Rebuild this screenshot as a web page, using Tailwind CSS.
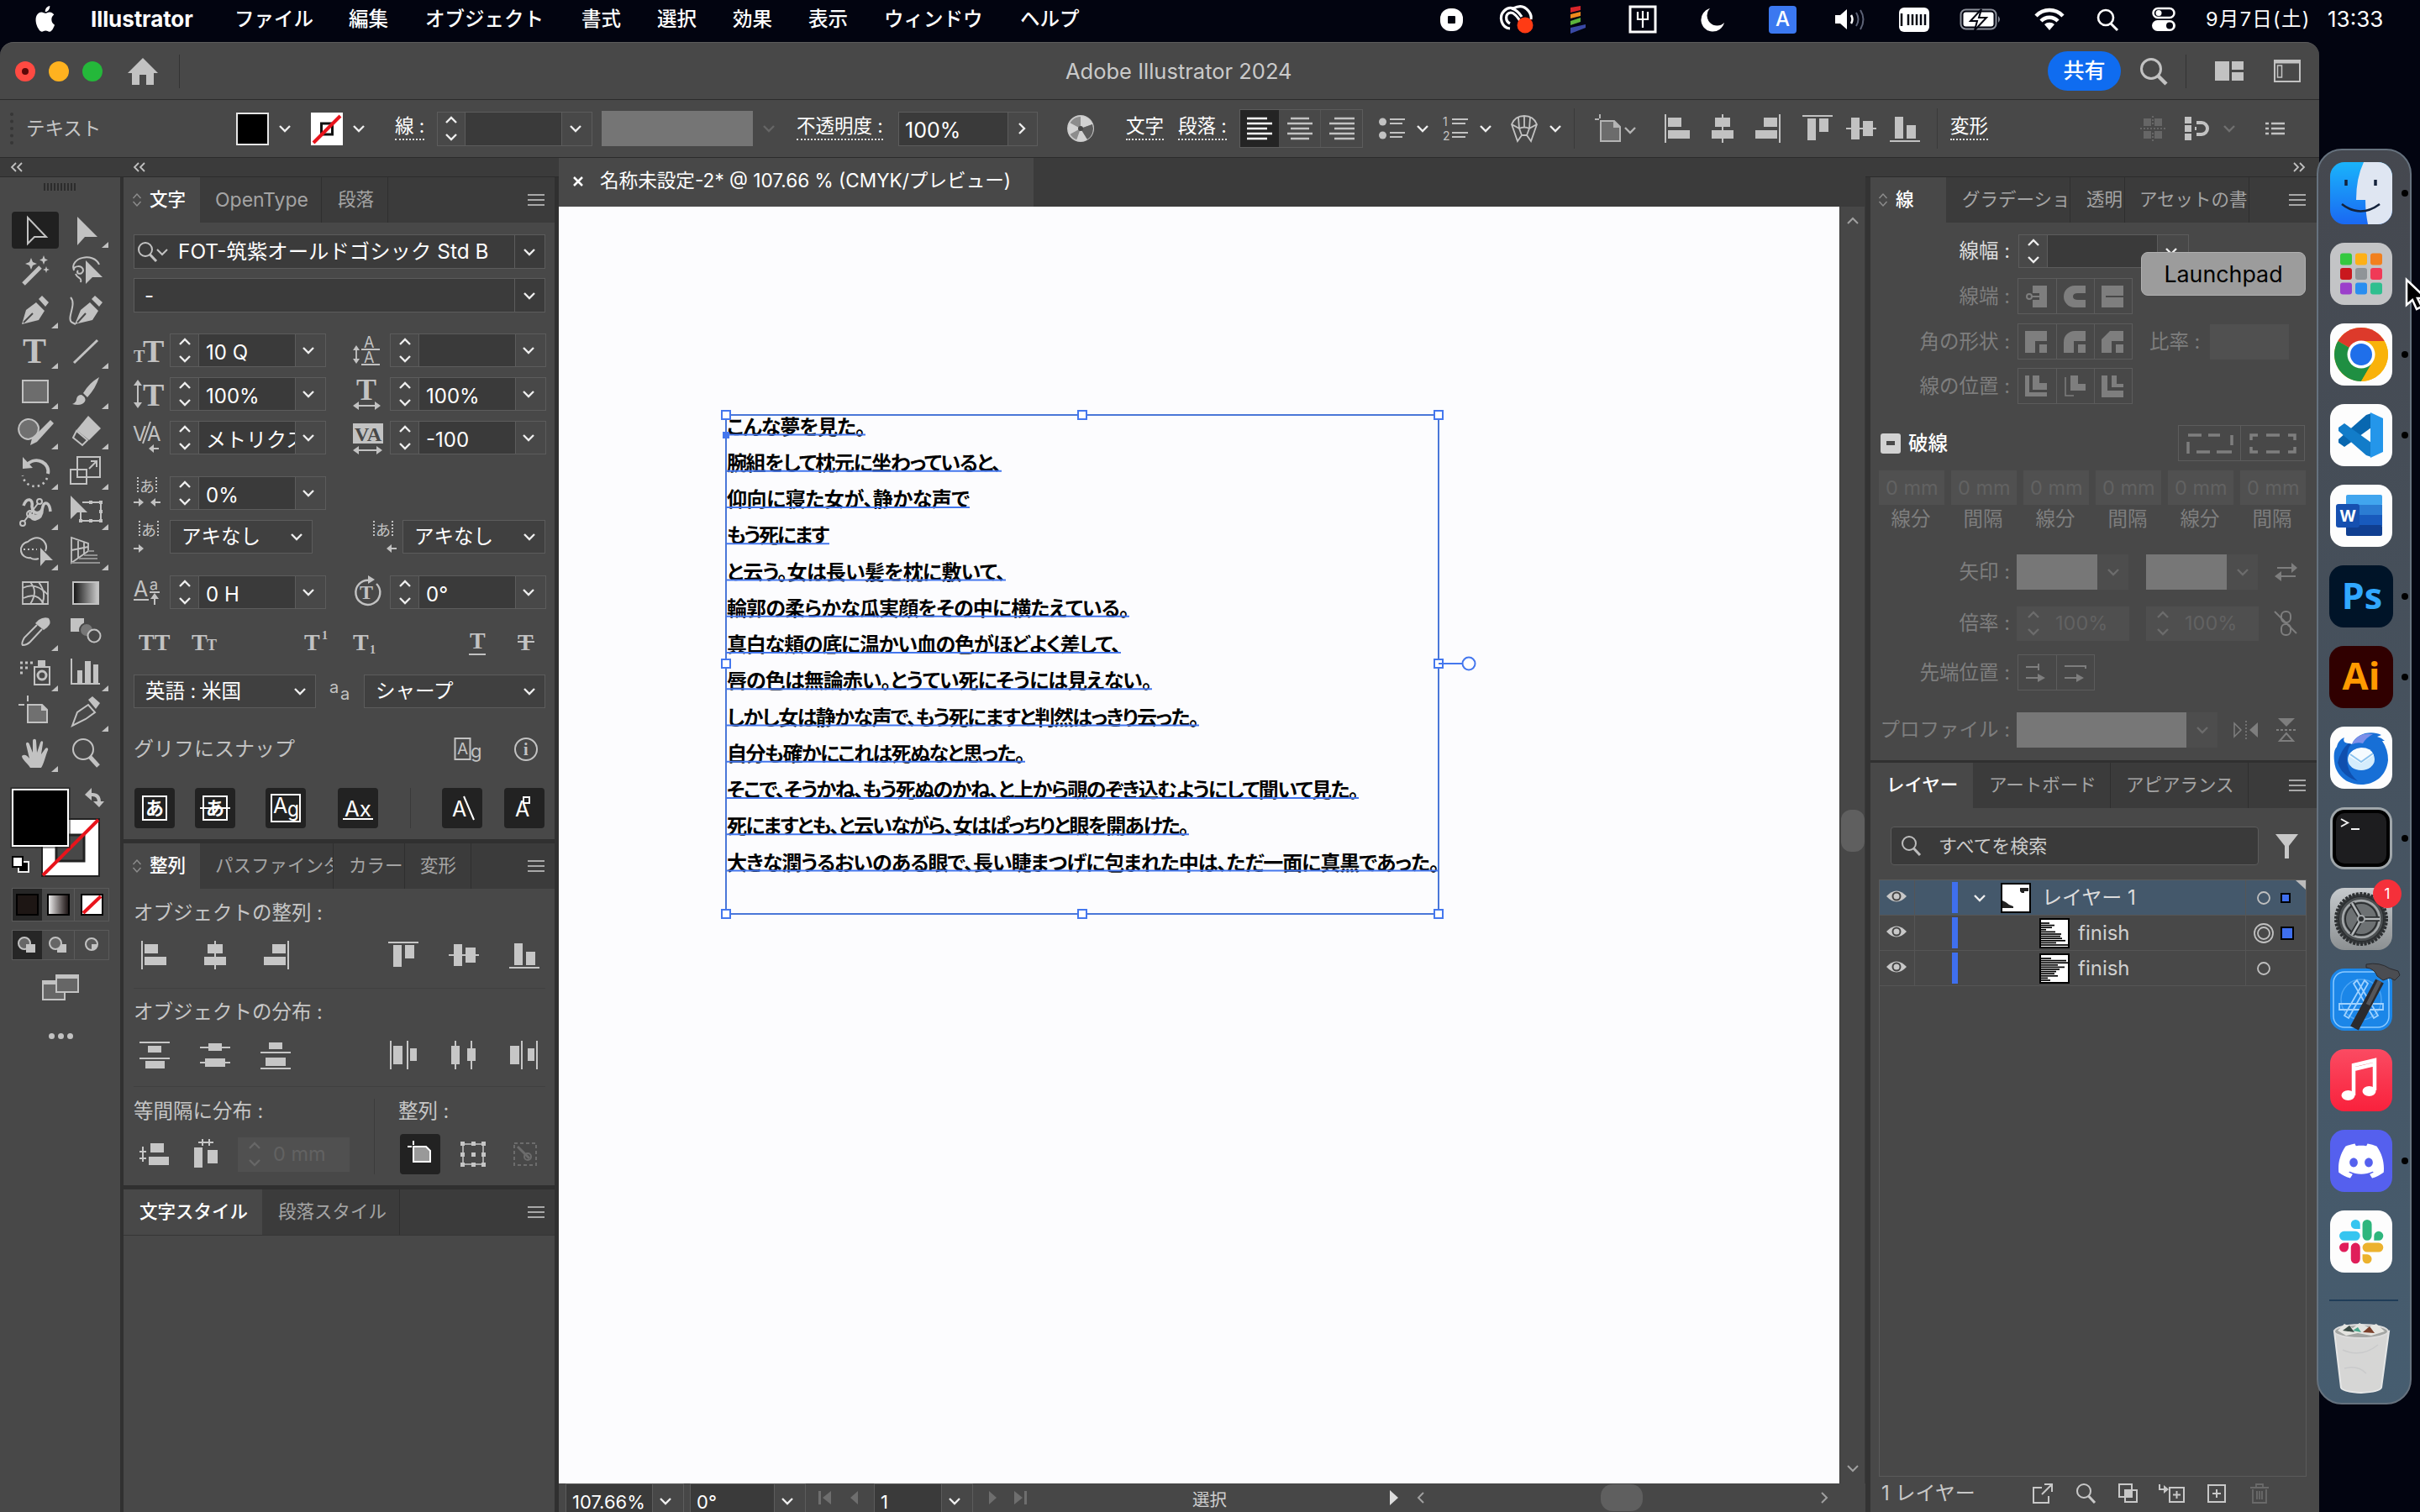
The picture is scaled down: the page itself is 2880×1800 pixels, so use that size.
<!DOCTYPE html>
<html lang="ja">
<head>
<meta charset="utf-8">
<title>Adobe Illustrator 2024</title>
<script src="https://cdn.jsdelivr.net/npm/@tailwindcss/browser@4"></script>
</head>
<body class="relative w-[2880px] h-[1800px] overflow-hidden bg-[#020410] font-['Inter','Noto_Sans_CJK_JP',sans-serif] text-[24px] leading-none text-[#d0d0d0] whitespace-nowrap">
<script>
const S = (w, h, b, c = '') => `<svg width="${w}" height="${h}" viewBox="0 0 ${w} ${h}" class="shrink-0 overflow-visible ${c}" fill="none" stroke="currentColor" stroke-width="2">${b}</svg>`;
const T = (x, y, s, t, extra = '') => `<text x="${x}" y="${y}" font-size="${s}" fill="currentColor" stroke="none" ${extra}>${t}</text>`;
const R = (x, y, w, h, extra = '') => `<rect x="${x}" y="${y}" width="${w}" height="${h}" fill="currentColor" stroke="none" ${extra}/>`;
const P = (d, extra = '') => `<path d="${d}" ${extra}/>`;
const F = (d) => `<path d="${d}" fill="currentColor" stroke="none"/>`;
const SERIF = 'font-family="Liberation Serif" font-weight="bold"';
const JP = 'font-family="Noto Sans CJK JP"';
const down = (c = 'text-[#eeeeee]') => S(16, 10, P('M2 2L8 8L14 2', 'stroke-width="2.4"'), c);
const menu = S(20, 16, P('M0 2H20M0 8H20M0 14H20'), 'text-[#a8a8a8]');
const spin = (c) => S(16, 32, P('M2 9L8 3L14 9M2 23L8 29L14 23', 'stroke-width="2.4"'), c);
const diamond = S(12, 18, P('M1.5 7L6 2L10.500 7M1.500 11L6 16L10.500 11', 'stroke-width="1.500"'), 'text-[#8c8c8c]');
const lens = (c) => S(24, 26, '<circle cx="10" cy="10" r="8"/>' + P('M15.500 16L23 24', 'stroke-width="3"'), c);

/* align icons, 36 x 36 */
const alignIcons = [
  P('M3 1V35') + R(6, 5, 16, 11) + R(6, 20, 26, 10),
  P('M18 1V35') + R(9, 5, 18, 11) + R(5, 20, 26, 10),
  P('M33 1V35') + R(14, 5, 16, 11) + R(4, 20, 26, 10),
  P('M0 3H36') + R(6, 6, 10, 26) + R(20, 6, 11, 16),
  P('M0 18H36') + R(6, 5, 10, 26) + R(20, 9, 12, 18),
  P('M0 33H36') + R(6, 4, 10, 26) + R(20, 14, 11, 16)
].map(b => S(36, 36, b));
const distIcons = [
  P('M0 3H36M0 22H36') + R(10, 7, 16, 8) + R(7, 25, 23, 9),
  P('M0 9H36M0 27H36') + R(10, 4, 16, 9) + R(6, 22, 24, 10),
  P('M0 15H36M0 34H36') + R(10, 3, 16, 8) + R(6, 21, 24, 10),
  P('M2 1V35M22 1V35') + R(5, 7, 11, 22) + R(25, 10, 8, 15),
  P('M8 1V35M27 1V35') + R(3, 7, 10, 22) + R(22, 10, 10, 15),
  P('M16 1V35M34 1V35') + R(2, 7, 11, 22) + R(23, 10, 8, 15)
].map(b => S(36, 36, b));

/* ---------- menu bar ---------- */
const mi = (w, t) => `<div class="${w} shrink-0">${t}</div>`;
const APPLE = '<path transform="translate(0 0) scale(1.15 1.28)" fill="currentColor" stroke="none" d="M12.152 6.896c-.948 0-2.415-1.078-3.96-1.04-2.04.027-3.91 1.183-4.961 3.014-2.117 3.675-.546 9.103 1.519 12.09 1.013 1.454 2.208 3.09 3.792 3.039 1.52-.065 2.09-.987 3.935-.987 1.831 0 2.35.987 3.96.948 1.637-.026 2.676-1.48 3.676-2.948 1.156-1.688 1.636-3.325 1.662-3.415-.039-.013-3.182-1.221-3.22-4.857-.026-3.04 2.48-4.494 2.597-4.559-1.429-2.09-3.623-2.324-4.39-2.376-2-.156-3.675 1.09-4.61 1.09zM15.53 3.83c.843-1.012 1.4-2.427 1.245-3.83-1.207.052-2.662.805-3.532 1.818-.78.896-1.454 2.338-1.273 3.714 1.338.104 2.715-.688 3.559-1.701"/>';
const menubar = `<header class="h-[50px] pb-[4px] pl-[40px] flex items-center text-white text-[23.5px] font-medium shrink-0">
${mi('w-[68px]', S(28, 32, APPLE))}
${mi('w-[171px] font-bold text-[26px] tracking-[-0.1px]', 'Illustrator')}${mi('w-[136px]', 'ファイル')}${mi('w-[91px]', '編集')}${mi('w-[186px]', 'オブジェクト')}${mi('w-[90px]', '書式')}${mi('w-[90px]', '選択')}${mi('w-[90px]', '効果')}${mi('w-[90px]', '表示')}${mi('w-[162px]', 'ウィンドウ')}${mi('w-[500px]', 'ヘルプ')}
${mi('w-[70px]', S(27, 27, '<rect width="27" height="27" rx="12" fill="currentColor" stroke="none"/><rect x="9" y="9" width="9" height="9" rx="1" fill="#020410" stroke="none"/>'))}
${mi('w-[84px]', S(42, 34, '<g stroke-width="3.200"><path d="M13 28C3 27 -1 14 6 7Q11 2 17 4Q28 -2 35 7Q39 12 38 17"/><path d="M13 22C7 19 7 10 14 9Q19 9 27 22M15 4Q22 6 27 14"/></g><circle cx="31" cy="24" r="9.500" fill="#ff3b14" stroke="none"/>'))}
${mi('w-[70px]', S(22, 34, '<g stroke="none"><path fill="#d9252a" d="M1 3L13 1V6L1 9Z"/><path fill="#ef8a1d" d="M1 11L13 8V13L1 16Z"/><path fill="#5cb33c" d="M1 19L13 15V20L1 24Z"/><path fill="#3a49a5" d="M1 27L19 23V27L1 34Z"/></g>'))}
${mi('w-[87px]', S(34, 34, '<rect x="2" y="2" width="30" height="30" stroke-width="3"/>' + P('M11 8V17H23V8M17 7V27', 'stroke-width="2.200"')))}
${mi('w-[80px]', S(28, 28, F('M10 1A14 14 0 1 0 27 18A12 12 0 0 1 10 1Z')))}
${mi('w-[78px]', '<div class="w-[33px] h-[33px] rounded-[4px] bg-[#3b78f0] flex items-center justify-center text-[24px]">A</div>')}
${mi('w-[77px]', S(42, 30, F('M1 10H7L15 3V27L7 20H1Z') + P('M20 10Q23 15 20 20', 'stroke-width="2.500"') + P('M26 7Q31 15 26 23M31 4Q38 15 31 27', 'stroke="#5d6377"')))}
${mi('w-[72px]', S(36, 29, '<rect x="0" y="0" width="36" height="29" rx="6" fill="currentColor" stroke="none"/><path stroke="#020410" d="M3 7V22M11 8V21M16 8V21M21 8V21M26 8V21M31 8V21" stroke-width="2.500"/>'))}
${mi('w-[89px]', S(50, 26, '<rect x="1.500" y="1.500" width="42" height="23" rx="6" stroke="#8b8f99"/><rect x="4.500" y="4.500" width="36" height="17" rx="3" fill="currentColor" stroke="none"/><path d="M46 9Q50 13 46 17" fill="#8b8f99" stroke="none"/><path fill="currentColor" stroke="#020410" d="M26 1L13 15H21L18 26L32 11H23Z"/>'))}
${mi('w-[74px]', S(36, 28, F('M18 27L12 20A9 9 0 0 1 24 20Z') + P('M8 16A14 14 0 0 1 28 16M2 10A22 22 0 0 1 34 10', 'stroke-width="4.500"')))}
${mi('w-[66px]', S(26, 27, '<circle cx="11" cy="11" r="9" stroke-width="2.600"/>' + P('M17 18L25 26', 'stroke-width="3"')))}
${mi('w-[64px]', S(28, 30, '<rect x="1.500" y="2" width="25" height="11" rx="5.500" stroke-width="2.500"/><circle cx="8" cy="7.500" r="3.500" fill="currentColor" stroke="none"/><rect x="0" y="16" width="28" height="13" rx="6.500" fill="currentColor" stroke="none"/><circle cx="21" cy="22.500" r="4" fill="#020410" stroke="none"/>'))}
${mi('w-[145px] text-[23.500px] font-normal tracking-[1.300px]', '9月7日(土)')}${mi('w-[80px] text-[26px] font-normal', '13:33')}
</header>`;

/* ---------- title bar ---------- */
const titlebar = `<div class="relative h-[68px] flex items-center border-b border-[#2c2c2c] shrink-0">
<div class="flex gap-[16px] pl-[18px]"><div class="w-6 h-6 rounded-full bg-[#ff4a42] flex items-center justify-center"><div class="w-2 h-2 rounded-full bg-[#5c0808]"></div></div><div class="w-6 h-6 rounded-full bg-[#ffb21f]"></div><div class="w-6 h-6 rounded-full bg-[#24b83a]"></div></div>
<div class="ml-[30px] w-[61px]">${S(36, 32, F('M18 0L36 18H31V32H22V20H14V32H5V18H0Z'), 'text-[#c2c2c2]')}</div>
<div class="w-px h-[40px] bg-[#333]"></div>
<div class="ml-[1054px] w-[1169px] text-[25.500px] text-[#cacaca]">Adobe Illustrator 2024</div>
<div class="w-[87px] h-[47px] rounded-full bg-[#0f6cf0] text-white text-[25px] font-medium flex items-center justify-center">共有</div>
<div class="ml-[22px] w-[55px]">${S(34, 34, '<circle cx="14" cy="14" r="11.500" stroke-width="3"/>' + P('M22 22L32 32', 'stroke-width="4.500"'), 'text-[#c2c2c2]')}</div>
<div class="w-px h-[40px] bg-[#333]"></div>
<div class="ml-[34px] w-[70px]">${S(35, 24, R(0, 0, 17, 23) + R(20, 0, 14, 10) + R(20, 13, 14, 10), 'text-[#c2c2c2]')}</div>
${S(32, 27, '<rect x="1" y="1" width="30" height="25"/>' + P('M1 3H31', 'stroke-width="3"') + '<rect x="4.500" y="7" width="5" height="14" stroke-width="1.500"/>', 'text-[#c2c2c2]')}
</div>`;

/* ---------- control bar ---------- */
const u = 'border-b-2 border-dotted border-[#dddddd] pb-[3px] inline-block text-white';
const vline = '<div class="w-px h-[48px] bg-[#3a3a3a]"></div>';
const para = (a) => S(30, 28, P(a, 'stroke-width="2.400"'));
const controlbar = `<div class="h-[69px] flex items-center border-b border-[#2c2c2c] shrink-0 text-[22.500px]">
<div class="w-[31px] h-[38px] pl-[12px]"><div class="w-[4px] h-full border-l-4 border-dotted border-[#363636]"></div></div>
<div class="w-[250px] text-[#c6c6c6]">テキスト</div>
<div class="w-[39px] h-[39px] bg-black border-2 border-[#e6e6e6]"></div><div class="w-[50px] pl-[11px]">${down()}</div>
${S(38, 39, '<rect width="38" height="39" fill="#fff" stroke="none"/><rect x="12.500" y="13" width="13" height="13" fill="#fff" stroke="#111" stroke-width="3"/><path d="M3 36L35 4" stroke="#e8141c" stroke-width="4"/>')}
<div class="w-[62px] pl-[11px]">${down()}</div>
<div class="w-[50px]"><span class="${u}">線 :</span></div>
<div class="w-[34px] h-[41px] border border-[#5c5c5c] flex items-center justify-center">${spin('text-[#eeeeee]')}</div><div class="w-[114px] h-[41px] border-y border-[#5c5c5c] bg-[#3a3a3a]"></div><div class="w-[37px] h-[41px] border border-[#5c5c5c] flex items-center justify-center pr-[4px]">${down()}</div>
<div class="ml-[11px] w-[180px] h-[42px] bg-[#757575]"></div><div class="w-[52px] pl-[11px]">${down('text-[#666666]')}</div>
<div class="w-[121px]"><span class="${u}">不透明度 :</span></div>
<div class="w-[131px] h-[41px] border border-[#5c5c5c] bg-[#3a3a3a] flex items-center pl-[7px] pt-[5px] text-white text-[25px]">100%</div><div class="w-[35px] h-[41px] border border-l-0 border-[#5c5c5c] flex items-center justify-center pr-[3px]">${S(10, 16, P('M2 2L8 8L2 14', 'stroke-width="2.400"'), 'text-[#eeeeee]')}</div>
<div class="ml-[34px] w-[71px]">${S(34, 34, '<circle cx="17" cy="17" r="15" fill="#8c8c8c" stroke="#c8c8c8"/><path d="M17 17L17 2A15 15 0 0 1 31 12ZM17 17L4 10A15 15 0 0 0 4 24ZM17 17L12 31A15 15 0 0 0 25 30Z" fill="#d2d2d2" stroke="none"/><path d="M17 17L31 12A15 15 0 0 1 25 30Z" fill="#5c5c5c" stroke="none"/><circle cx="17" cy="17" r="3" fill="#484848" stroke="none"/>')}</div>
<div class="w-[62px]"><span class="${u}">文字</span></div><div class="w-[73px]"><span class="${u}">段落 :</span></div>
<div class="flex border border-[#5c5c5c] h-[46px] text-[#c2c2c2]"><div class="w-[46px] bg-[#242424] text-white flex items-center justify-center">${para('M0 2H24M0 8H30M0 14H24M0 20H30M0 26H24')}</div><div class="w-[50px] border-r border-[#555] flex items-center justify-center">${para('M4 2H26M0 8H30M4 14H26M0 20H30M4 26H26')}</div><div class="w-[49px] flex items-center justify-center">${para('M6 2H30M0 8H30M6 14H30M0 20H30M6 26H30')}</div></div>
<div class="ml-[19px] w-[44px] text-[#c2c2c2]">${S(31, 26, '<circle cx="4.500" cy="5" r="4.500" fill="currentColor" stroke="none"/><circle cx="4.500" cy="21" r="4.500" fill="currentColor" stroke="none"/>' + P('M13 2H31M13 7H28M13 18H31M13 23H28'))}</div><div class="w-[32px]">${down()}</div>
<div class="w-[43px] text-[#c2c2c2]">${S(30, 30, T(0, 12, 14, '1') + T(0, 29, 14, '2') + P('M11 4H30M11 9H27M11 20H30M11 25H27'))}</div><div class="w-[37px]">${down()}</div>
<div class="w-[46px] text-[#c2c2c2]">${S(34, 32, P('M2 11Q6 1 17 1Q28 1 32 11L25 31L20 24H14L9 31ZM2 11L11 16L14 24M32 11L23 16L20 24M11 16Q17 13 23 16M17 1V14M10 3L11 16M24 3L23 16', 'stroke-width="1.800"'))}</div><div class="w-[30px]">${down()}</div>
${vline}
<div class="ml-[24px] w-[34px] text-[#b4b4b4]">${S(32, 34, P('M6 0V5M0 6H5', 'stroke-width="2"') + '<path d="M7 8H23L30 15V32H7Z" fill="#6c6c6c"/>' + F('M22 7L31 16H22Z'))}</div><div class="w-[47px] pt-[4px]">${down('text-[#b4b4b4]')}</div>
<div class="flex gap-[17px] text-[#c2c2c2]">${alignIcons.slice(0, 3).join('')}</div><div class="flex gap-[16px] ml-[24px] text-[#c2c2c2]">${alignIcons.slice(3).join('')}</div>
<div class="ml-[20px] w-[16px]">${vline}</div><div class="w-[226px]"><span class="${u}">変形</span></div>
<div class="w-[53px] text-[#666]">${S(30, 30, P('M15 0V10M0 15H30M15 20V30', 'stroke-dasharray="2 2"') + R(4, 3, 9, 9) + R(17, 3, 9, 9) + R(4, 18, 9, 9) + R(17, 18, 9, 9))}</div>
<div class="w-[45px] text-[#c2c2c2]">${S(32, 32, R(0, 2, 8, 8) + R(0, 12, 8, 8) + R(0, 22, 8, 8) + P('M12 16H14M14 9H20A7 7 0 0 1 20 23H14', 'stroke-width="4"'))}</div>
<div class="w-[51px]">${down('text-[#707070]')}</div>
<div class="text-[#c2c2c2]">${S(24, 18, P('M7 3H23M7 9H23M7 15H23M0 3H4M0 9H4M0 15H4', 'stroke-width="2.400"'))}</div>
</div>`;

/* ---------- toolbar ---------- */
const tri = F('M57 38V45H49Z');
const tools = [
 ['<rect x="2" y="2" width="56" height="44" rx="4" fill="#202020" stroke="none"/>' + P('M21 9V40L29 32H43Z'), 0],
 [F('M20 8V42L29 32H44Z'), 1],
 [P('M16 40L36 20', 'stroke-width="5"') + F('M25 9L27 14L32 16L27 18L25 23L23 18L18 16L23 14ZM40 6L41.500 10L45 11.500L41.500 13L40 17L38.500 13L35 11.500L38.500 10ZM43 19L44 22L47 23L44 24L43 27L42 24L39 23L42 22Z'), 0],
 [P('M16 24C10 8 40 2 46 17M16 24C14 18 27 17 27 24C26 30 17 28 21 24M18 28C20 34 26 32 24 38') + F('M30 12V40L38 32H50Z'), 0],
 [F('M14 40L19 23L31 14L41 24L34 35ZM34 10L38 6L46 14L42 19Z') + P('M16 38L27 27', 'stroke="#484848"'), 1],
 [P('M12 8C20 16 6 34 14 38L18 40') + F('M17 40L24 23L35 14L45 24L38 35ZM37 10L41 6L50 14L46 19Z') + P('M20 38L30 27', 'stroke="#484848"'), 0],
 [T(15, 38, 42, 'T', SERIF), 1],
 [P('M16 38L44 11', 'stroke-width="3"'), 1],
 [R(14, 10, 32, 28, 'opacity=".3"') + P('M15 11H45V37H15Z'), 1],
 [F('M46 7Q42 20 32 31L27 26Q34 14 46 7ZM25 28Q31 31 29 36Q25 42 14 39Q19 37 19 33Q20 28 25 28Z'), 1],
 ['<path d="M22 33A12 12 0 1 1 34 19Q34 30 22 33" fill="#707070"/>' + F('M48 10L52 14L32 36L24 40L26 32Z'), 1],
 [F('M33 5L48 20L34 34L19 22Z') + P('M19 23L32 34L26 40L15 31Z'), 1],
 [P('M20 15C32 4 48 14 45 26', 'stroke-width="4"') + F('M15 6V20L27 19Z') + P('M44 31A15 15 0 0 1 15 28', 'stroke-dasharray="2.500 4" stroke-width="2.600"'), 1],
 [P('M20 6H47V30H20ZM12 21H31V38H12ZM34 20L42 12M36 11H43V18'), 1],
 [P('M16 16C20 5 28 8 26 17C27 28 38 26 39 17C41 10 47 12 48 23', 'stroke-width="3.500"') + F('M22 22Q30 32 40 20Q40 32 30 34Q22 34 22 22Z') + P('M15 37L35 11') + '<circle cx="15" cy="37" r="3" fill="#484848"/><circle cx="24" cy="26" r="4"/><circle cx="35" cy="11" r="3" fill="#484848"/>', 1],
 [F('M12 4V32L20 24H32Z') + P('M26 12H48V34H24V24') + R(34, 10, 4, 4) + R(46, 10, 4, 4) + R(46, 21, 4, 4) + R(46, 32, 4, 4) + R(34, 32, 4, 4) + R(22, 32, 4, 4), 1],
 [P('M34 31Q28 33 24 30A9.500 9.500 0 1 1 21 11Q32 2 40 10Q45 16 42 22') + P('M16 20H32', 'stroke-dasharray="2 3"') + F('M36 18V40L42 33H51Z'), 1],
 [P('M13 6V36L33 22V13ZM13 21L33 17M21 10V30M28 12V26', 'stroke-width="1.800"') + P('M33 22H40M28 27H44M22 31H44M13 36H47', 'stroke-width="1.800" stroke="#909090"'), 1],
 [P('M15 11H45V37H15ZM15 18Q30 10 45 26M16 30Q32 22 40 37M24 11Q34 22 24 37M34 11Q44 24 38 37', 'stroke-width="1.800"'), 0],
 ['<rect x="15" y="11" width="30" height="26" fill="url(#gr)"/>', 0],
 [F('M46 6Q50 12 44 17L40 20L30 12L34 8Q40 4 46 6Z') + P('M32 14L17 29Q13 36 15 38Q20 38 24 34L38 19'), 1],
 [R(12, 6, 16, 16) + '<circle cx="31" cy="20" r="8" fill="#777" stroke="#484848"/><circle cx="40" cy="27" r="7.500" fill="#484848"/>', 0],
 [P('M29 16H47V37H29Z') + R(33, 8, 9, 7) + '<circle cx="38" cy="26" r="5" stroke-width="3"/>' + P('M12 11H30M12 17H22M12 23H16', 'stroke-dasharray="3 3" stroke-width="3"'), 1],
 [P('M13 6V36H47') + R(20, 20, 6, 16) + R(29, 9, 7, 27) + R(39, 13, 6, 23), 1],
 [P('M21 2V9M10 13H17') + '<path d="M21 13H38L44 19V34H21Z" fill="#707070"/>' + F('M37 12L45 20H37Z'), 0],
 [P('M14 38L20 22L33 13L41 22L30 30Z') + F('M33 7L38 3L47 11L42 18Z'), 1],
 [F('M24 40C20 34 14 30 14 26C17 23 21 26 23 29L19 12C19 9 22 9 23 12L27 22L27 8C27 5 31 5 31 8L32 22L36 10C37 7 40 8 39 11L37 24L42 17C44 15 46 17 45 19C42 26 40 36 37 40Z'), 1],
 ['<circle cx="27" cy="18" r="12"/>' + P('M35 27L45 38', 'stroke-width="5"'), 0]
];
const dots = Array(10).fill('<div class="w-[2px] h-[9px] bg-[#2c2c2c]"></div>').join('');
const toolbar = `<aside class="w-[143px] shrink-0 bg-[#484848] flex flex-col text-[#c2c2c2]">
<div class="h-[39px] pt-[7px] pl-[52px] flex gap-[2px] items-start">${dots}</div>
<div class="grid grid-cols-2 w-[120px] ml-[12px]">${tools.map(t => S(60, 48, t[0] + (t[1] ? tri : ''))).join('')}</div>
<div class="h-[135px] pt-[16px]">${S(140, 110, '<g stroke="none"><rect x="50" y="37" width="68" height="68" fill="#fff" stroke="#222"/><rect x="67" y="56" width="33" height="31" fill="#484848" stroke="#222" stroke-width="3"/></g><path d="M51 104L117 38" stroke="#e8141c" stroke-width="4"/><rect x="15" y="2" width="66" height="67" fill="#000" stroke="#fff"/><rect x="13" y="0" width="70" height="71" stroke="#222" stroke-width="1"/><path d="M106 8H110Q118 8 118 17" stroke-width="4"/>' + F('M101 8L109 0V15ZM111 16H124L118 23Z') + '<rect x="22" y="88" width="12" height="12" fill="#000" stroke="#eee"/><rect x="15" y="82" width="12" height="12" fill="#fff" stroke="#000"/>')}</div>
<div class="ml-[14px] flex w-[116px] h-[40px] border border-[#5a5a5a]"><div class="w-[35px] bg-[#262626] flex items-center justify-center"><div class="w-[27px] h-[26px] border-2 border-black bg-[#1d1614]"></div></div><div class="w-[40px] border-r border-[#5a5a5a] flex items-center justify-center"><div class="w-[27px] h-[26px] border-2 border-black bg-linear-to-r from-[#eeeeee] to-[#221a1a]"></div></div><div class="w-[40px] flex items-center justify-center">${S(27, 26, '<rect x="1" y="1" width="25" height="24" fill="#fff" stroke="#000"/><path d="M3 23L24 3" stroke="#e8141c" stroke-width="4"/>')}</div></div>
<div class="mt-[10px] ml-[14px] flex w-[116px] h-[36px] border border-[#5a5a5a]"><div class="w-[35px] bg-[#262626] flex items-center justify-center">${S(24, 22, '<circle cx="9" cy="9" r="7" fill="#666"/>' + R(11, 10, 11, 10))}</div><div class="w-[40px] border-r border-[#5a5a5a] flex items-center justify-center">${S(24, 22, R(11, 10, 11, 10) + '<circle cx="9" cy="9" r="7" fill="#666"/>')}</div><div class="w-[40px] flex items-center justify-center">${S(20, 20, '<circle cx="10" cy="9" r="7" fill="#5a5a5a"/>' + F('M10 9H17Q17 16 10 16Z'))}</div></div>
<div class="mt-[16px] ml-[50px]">${S(46, 34, '<rect x="1" y="9" width="26" height="22" fill="#666"/><rect x="17" y="2" width="26" height="20" fill="#666"/>' + R(0, 8, 17, 5) + R(16, 1, 28, 5))}</div>
<div class="mt-[37px] ml-[58px] flex gap-[4px]"><div class="w-[7px] h-[7px] rounded-full bg-[#c2c2c2]"></div><div class="w-[7px] h-[7px] rounded-full bg-[#c2c2c2]"></div><div class="w-[7px] h-[7px] rounded-full bg-[#c2c2c2]"></div></div>
</aside>`;

/* ---------- left panels ---------- */
const tabOn = (w, t, d = '') => `<div class="${w} h-full bg-[#484848] text-white font-medium flex items-center shrink-0 gap-[9px]">${d}<span>${t}</span></div>`;
const tab = (w, t) => `<div class="${w} h-full border-r border-[#2f2f2f] text-[#a4a4a4] flex items-center shrink-0 overflow-hidden">${t}</div>`;
const tabs = (items, pr = 'pr-[12px]') => `<div class="h-[54px] shrink-0 bg-[#3b3b3b] flex items-center text-[21.500px]">${items}<div class="ml-auto ${pr}">${menu}</div></div>`;
const num = (v, w = 'w-[114px]') => `<div class="flex h-[40px] border border-[#5c5c5c] shrink-0"><div class="w-[34px] border-r border-[#5c5c5c] flex items-center justify-center">${spin('text-[#eeeeee]')}</div><div class="${w} bg-[#3a3a3a] pl-[8px] pt-[5px] flex items-center overflow-hidden text-white text-[24px]">${v}</div><div class="w-[36px] border-l border-[#5c5c5c] flex items-center justify-center pr-[5px]">${down()}</div></div>`;
const row = (mt, i1, v1, i2, v2) => `<div class="${mt} flex items-center h-[40px]"><div class="w-[43px]">${i1}</div>${num(v1)}${i2 ? `<div class="w-[76px] pl-[32px]">${i2}</div>${num(v2)}` : ''}</div>`;
const sel = (w, t) => `<div class="${w} h-[40px] shrink-0 bg-[#404040] border border-[#5c5c5c] text-white flex items-center justify-between pl-[13px] pr-[10px] text-[23.500px]"><span>${t}</span>${down()}</div>`;
const gbtn = (b) => `<div class="w-[48px] h-[48px] rounded-[4px] bg-[#222222] text-white flex items-center justify-center">${S(40, 36, b)}</div>`;
const arrows = (x1, x2, y) => P(`M${x1 + 3} ${y}H${x2 - 3}`) + F(`M${x1} ${y}L${x1 + 7} ${y - 5}V${y + 5}ZM${x2} ${y}L${x2 - 7} ${y - 5}V${y + 5}Z`);
const larr = (x, y) => P(`M${x + 3} ${y}H${x + 12}`) + F(`M${x} ${y}L${x + 6} ${y - 5}V${y + 5}Z`);
const rarr = (x, y) => P(`M${x} ${y}H${x + 8}`) + F(`M${x + 12} ${y}L${x + 6} ${y - 5}V${y + 5}Z`);
const aki = (x) => T(x + 3, 18, 18, 'あ', JP) + P(`M${x + 1} 0V20M${x + 23} 0V20`, 'stroke-dasharray="2 2"');
const leftPanels = `<section class="w-[513px] shrink-0 bg-[#484848] flex flex-col">
${tabs(tabOn('w-[91px] pl-[10px]', '文字', diamond) + tab('w-[145px] pl-[18px] text-[23px]', 'OpenType') + tab('w-[79px] pl-[19px]', '段落'))}
<div class="pl-[12px] text-[#c2c2c2] h-[734px] shrink-0">
<div class="mt-[14px] w-[490px] h-[41px] border border-[#5c5c5c] bg-[#3b3b3b] flex items-center text-white text-[24.400px]"><div class="w-[26px] pl-[3px]">${lens('text-[#c2c2c2]')}</div><div class="w-[26px]">${S(14, 10, P('M1 2L7 8L13 2'), 'text-[#c2c2c2]')}</div><div class="w-[400px]">FOT-筑紫オールドゴシック Std B</div><div class="w-[36px] h-full border-l border-[#5c5c5c] flex items-center justify-center pr-[2px]">${down()}</div></div>
<div class="mt-[11px] w-[490px] h-[41px] border border-[#5c5c5c] bg-[#3b3b3b] flex items-center text-white"><div class="w-[452px] pl-[12px]">-</div><div class="w-[36px] h-full border-l border-[#5c5c5c] flex items-center justify-center pr-[2px]">${down()}</div></div>
${row('mt-[25px]', S(40, 36, T(11, 32, 38, 'T', SERIF) + T(0, 32, 20, 'T', SERIF)), '10 Q', S(36, 38, T(13, 16, 18, 'A') + T(13, 34, 18, 'A') + P('M10 18H32M10 36H32M4 17V31', 'stroke-width="1.800"') + F('M4 13L0 19H8ZM4 35L0 29H8Z')), '')}
${row('mt-[12px]', S(40, 36, T(11, 32, 38, 'T', SERIF) + P('M5 5V31') + F('M5 1L0 8H10ZM5 35L0 28H10Z')), '100%', S(36, 38, T(4, 26, 36, 'T', SERIF) + arrows(0, 33, 33)), '100%')}
${row('mt-[12px]', S(40, 40, T(-1, 24, 24, 'V') + T(16, 24, 24, 'A') + P('M11 27L20 1') + larr(18, 33)), 'メトリクス', S(38, 40, R(0, 3, 36, 24) + '<text x="2" y="24" font-size="24" font-family="Liberation Serif" font-weight="bold" fill="#484848" stroke="none" textLength="32">VA</text>' + arrows(0, 35, 35)), '-100')}
${row('mt-[26px]', S(40, 38, aki(4) + rarr(0, 30) + larr(20, 30)), '0%')}
<div class="mt-[12px] flex h-[40px] items-center"><div class="w-[43px]">${S(40, 38, aki(6) + rarr(0, 33))}</div>${sel('w-[170px]', 'アキなし')}<div class="w-[107px] pl-[72px]">${S(34, 38, aki(0) + larr(16, 33))}</div>${sel('w-[170px]', 'アキなし')}</div>
${row('mt-[26px]', S(40, 38, T(0, 24, 25, 'A') + T(19, 16, 18, 'a') + P('M0 28H18M19 19H31M25 23V34') + F('M25 20L20 27H30Z')), '0 H', S(36, 38, P('M20 5A14.500 14.500 0 1 0 28 9', 'stroke-width="2.400"') + F('M18 -1L26 4L18 9Z') + T(8, 27, 24, 'T', SERIF)), '0°')}
<div class="mt-[22px] h-[34px] flex items-center">${S(490, 34, T(6, 27, 28, 'TT', SERIF) + T(69, 27, 28, 'T', SERIF) + T(87, 27, 18, 'T', SERIF) + T(203, 27, 28, 'T', SERIF) + T(224, 14, 14, '1', SERIF) + T(261, 27, 28, 'T', SERIF) + T(281, 31, 14, '1', SERIF) + T(400, 25, 28, 'T', SERIF) + P('M399 32H419') + T(457, 27, 28, 'T', SERIF) + P('M457 17H477'))}</div>
<div class="mt-[22px] h-[40px] flex items-center">${sel('w-[217px]', '英語 : 米国')}<div class="w-[57px] pl-[16px]">${S(28, 26, T(0, 15, 20, 'a') + T(13, 23, 20, 'a'))}</div>${sel('w-[216px]', 'シャープ')}</div>
<div class="mt-[29px] h-[40px] flex items-center"><div class="w-[381px]">グリフにスナップ</div><div class="w-[71px]">${S(36, 32, '<rect x="1.500" y="3" width="18" height="25"/>' + T(4, 22, 19, 'A') + T(20, 26, 22, 'g'))}</div>${S(30, 30, '<circle cx="15" cy="15" r="13"/>' + T(12, 22, 20, 'i', SERIF))}</div>
<div class="mt-[26px] h-[48px] flex items-center"><div class="w-[73px] pl-px">${gbtn('<rect x="6" y="4" width="28" height="28"/>' + T(9, 26, 22, 'あ', JP + ' font-weight="bold"'))}</div><div class="w-[84px]">${gbtn('<rect x="6" y="4" width="28" height="28"/>' + T(9, 26, 22, 'あ', JP + ' font-weight="bold"') + P('M2 18H38'))}</div><div class="w-[86px]">${gbtn('<rect x="3" y="2" width="34" height="32"/>' + T(5, 24, 25, 'A') + T(22, 28, 25, 'g', 'textLength="14" lengthAdjust="spacingAndGlyphs"'))}</div><div class="w-[86px]">${gbtn(T(4, 28, 25, 'Ax', 'textLength="32" lengthAdjust="spacingAndGlyphs"') + P('M2 31H38'))}</div><div class="w-[38px] h-[48px] border-l border-[#3a3a3a]"></div><div class="w-[74px]">${gbtn(T(8, 28, 25, 'A') + P('M22 4L34 32'))}</div>${gbtn(T(9, 28, 25, 'A') + '<rect x="19" y="5" width="7" height="7" fill="#222"/>')}</div>
</div>
<div class="h-[5px] shrink-0 bg-[#303030]"></div>
${tabs(tabOn('w-[91px] pl-[10px]', '整列', diamond) + tab('w-[159px] pl-[18px]', 'パスファインダー') + tab('w-[85px] pl-[18px]', 'カラー') + tab('w-[79px] pl-[18px]', '変形'))}
<div class="pl-[12px] text-[#c6c6c6] text-[23.500px] h-[353px] shrink-0">
<div class="h-[57px] flex items-center">オブジェクトの整列 :</div>
<div class="mt-[3px] h-[38px] flex items-center pl-[7px]"><div class="flex gap-[36px]">${alignIcons.slice(0, 3).join('')}</div><div class="ml-[116px] flex gap-[36px]">${alignIcons.slice(3).join('')}</div></div>
<div class="mt-[20px] h-[56px] w-[490px] border-t border-[#404040] flex items-center">オブジェクトの分布 :</div>
<div class="mt-[5px] h-[38px] flex items-center pl-[7px]"><div class="flex gap-[36px]">${distIcons.slice(0, 3).join('')}</div><div class="ml-[117px] flex gap-[35px]">${distIcons.slice(3).join('')}</div></div>
<div class="mt-[18px] h-[58px] w-[490px] border-t border-[#404040] flex items-center"><div class="w-[315px]">等間隔に分布 :</div><div>整列 :</div></div>
<div class="-mt-px h-[48px] flex items-center"><div class="w-[66px] pl-[7px]">${S(36, 34, P('M4 8V26M0 14H8M0 22H8') + R(13, 4, 16, 11) + R(11, 20, 24, 10))}</div><div class="w-[58px]">${S(36, 36, P('M11 4H29M16 0V8M24 0V8') + R(6, 10, 10, 24) + R(22, 13, 12, 16))}</div><div class="w-[133px] h-[41px] bg-[#505050] flex items-center gap-[14px] pl-[12px] text-[#626262]">${spin('text-[#676767]')}<span>0 mm</span></div><div class="ml-[29px] w-[31px] h-[90px] self-end border-l border-[#3c3c3c]"></div><div class="w-[72px]">${gbtn(P('M12 2V7M5 9H10') + '<path d="M12 9H27L32 14V27H12Z" fill="#999"/>')}</div><div class="w-[62px]">${S(30, 30, P('M3 3H27V27H3Z', 'stroke-width="1.500"') + R(0, 0, 5, 5) + R(13, 0, 5, 5) + R(25, 0, 5, 5) + R(0, 13, 5, 5) + R(13, 13, 5, 5) + R(25, 13, 5, 5) + R(0, 25, 5, 5) + R(13, 25, 5, 5) + R(25, 25, 5, 5))}</div>${S(30, 30, P('M2 2H28V28H2Z', 'stroke-dasharray="4 3"') + P('M6 6L20 20', 'stroke-width="3"') + '<circle cx="18" cy="18" r="4"/>', 'text-[#6c6c6c]')}</div>
</div>
<div class="h-[5px] shrink-0 bg-[#303030]"></div>
<div class="border-b border-[#363636]">${tabs(tabOn('w-[165px] pl-[19px]', '文字スタイル') + tab('w-[164px] pl-[19px]', '段落スタイル'))}</div>
</section>`;

/* ---------- document ---------- */
const story = [
 ['こんな夢を見た。', 165], ['腕組をして枕元に坐わっていると、', 327], ['仰向に寝た女が、静かな声で', 289], ['もう死にます', 122],
 ['と云う。女は長い髪を枕に敷いて、', 332], ['輪郭の柔らかな瓜実顔をその中に横たえている。', 479], ['真白な頬の底に温かい血の色がほどよく差して、', 469],
 ['唇の色は無論赤い。とうてい死にそうには見えない。', 506], ['しかし女は静かな声で、もう死にますと判然はっきり云った。', 562], ['自分も確かにこれは死ぬなと思った。', 355],
 ['そこで、そうかね、もう死ぬのかね、と上から覗のぞき込むようにして聞いて見た。', 752], ['死にますとも、と云いながら、女はぱっちりと眼を開あけた。', 550], ['大きな潤うるおいのある眼で、長い睫まつげに包まれた中は、ただ一面に真黒であった。', 848]
];
const handle = (x, y) => `<rect x="${x - 5}" y="${y - 5}" width="10" height="10" fill="#fff" stroke="#4477ee" stroke-width="2"/>`;
const artboard = `<svg width="920" height="620" viewBox="854 484 920 620" fill="none" class="ml-[189px] mt-[238px]">
${story.map((l, i) => `<text x="865" y="${516.5 + i * 43.25}" font-size="24" font-weight="bold" font-family="Noto Sans CJK JP" fill="#000" textLength="${l[1]}" lengthAdjust="spacing" style="font-feature-settings:'palt'">${l[0]}</text><path d="M865 ${517.5 + i * 43.25}H${865 + l[1]}" stroke="#4477ee" stroke-width="2"/>`).join('')}
<rect x="864" y="494" width="848" height="594" stroke="#4a77d8" stroke-width="2"/>
${handle(864, 494) + handle(1288, 494) + handle(1712, 494) + handle(864, 790) + handle(864, 1088) + handle(1288, 1088) + handle(1712, 1088)}
<rect x="860" y="514" width="8" height="8" fill="#4477ee"/>${handle(1712, 790)}<path d="M1712 790H1740" stroke="#4477ee" stroke-width="2"/><circle cx="1748" cy="790" r="7.500" fill="#fff" stroke="#4477ee" stroke-width="2"/></svg>`;
const sfield = (w, t) => `<div class="${w} h-[34px] shrink-0 border border-b-0 border-[#5c5c5c] bg-[#3a3a3a] text-white flex items-center pl-[7px] pt-[9px] text-[22px] overflow-hidden">${t}</div><div class="w-[37px] h-[34px] shrink-0 border border-b-0 border-l-0 border-[#5c5c5c] flex items-center justify-center pt-[6px] pr-[6px]">${down()}</div>`;
const documentArea = `<main class="w-[1555px] shrink-0 flex flex-col">
<div class="h-[58px] shrink-0 flex bg-[#3b3b3b]"><div class="w-[565px] bg-[#484848] flex items-center pl-[16px] text-white text-[22.600px] pb-[3px]"><div class="w-[33px]">${S(14, 14, P('M2 2L12 12M12 2L2 12', 'stroke-width="2.500"'))}</div>名称未設定-2* @ 107.66 % (CMYK/プレビュー)</div></div>
<div class="flex h-[1520px] shrink-0"><div class="w-[1524px] bg-[#fcfcfe] overflow-hidden">${artboard}</div>
<div class="w-[31px] bg-[#474747] border-x border-[#3a3a3a] flex flex-col items-center text-[#a0a0a0] pt-[12px]">${S(16, 10, P('M2 8L8 2L14 8'))}<div class="mt-[696px] w-[28px] h-[50px] rounded-[12px] bg-[#5f5f5f]"></div><div class="mt-[729px]">${S(16, 10, P('M2 2L8 8L14 2'))}</div></div></div>
<div class="h-[34px] shrink-0 bg-[#474747] flex items-center text-[#6e6e6e]"><div class="w-[8px]"></div>${sfield('w-[104px]', '107.66%')}<div class="w-[7px]"></div>${sfield('w-[101px]', '0°')}<div class="w-[81px] pl-[15px] flex gap-[22px]">${S(16, 16, R(0, 0, 3, 16) + F('M15 0V16L5 8Z'))}${S(10, 16, F('M9 0V16L0 8Z'))}</div>${sfield('w-[81px]', '1')}<div class="w-[261px] pl-[18px] flex gap-[18px]">${S(12, 16, F('M1 0V16L10 8Z'))}${S(16, 16, R(13, 0, 3, 16) + F('M1 0V16L11 8Z'))}</div><div class="w-[235px] text-[20.500px] text-[#d0d0d0] pt-[6px]">選択</div>
<div class="w-[32px]">${S(11, 18, F('M0 0L10 9L0 18Z'), 'text-[#dddddd]')}</div>${S(10, 16, P('M8 2L2 8L8 14'), 'text-[#a0a0a0]')}<div class="ml-[209px] w-[50px] h-[32px] rounded-[14px] bg-[#5f5f5f]"></div><div class="ml-[211px]">${S(10, 16, P('M2 2L8 8L2 14'), 'text-[#a0a0a0]')}</div></div>
</main>`;

/* ---------- right panels ---------- */
const lab = (t, c = 'text-[#7e7e7e]') => `<div class="w-[168px] text-right pr-[2px] shrink-0 ${c}">${t} :</div>`;
const cells = (a) => `<div class="ml-[7px] flex h-[43px] border border-[#5c5c5c] shrink-0">${a.map((b, i) => `<div class="w-[45px] ${i ? 'border-l border-[#5c5c5c]' : ''} flex items-center justify-center pr-[3px]">${S(26, 26, b)}</div>`).join('')}</div>`;
const dim = (w) => `<div class="${w} h-[42px] bg-[#505050] shrink-0"></div>`;
const dd = `<div class="w-[37px] h-[42px] bg-[#4d4d4d] shrink-0 flex items-center justify-center">${down('text-[#6c6c6c]')}</div>`;
const sp = `<div class="w-[134px] h-[41px] bg-[#4f4f4f] shrink-0 flex items-center gap-[18px] pl-[12px] text-[#626262]">${spin('text-[#6c6c6c]')}<span>100%</span></div>`;
const eye = S(24, 14, '<path d="M0 7Q12 -6 24 7Q12 20 0 7Z" fill="currentColor" stroke="none"/><circle cx="12" cy="7" r="4.500" fill="currentColor" stroke="#444"/>', 'text-[#c8c8c8]');
const thumb = (b) => S(36, 36, '<rect x="1" y="1" width="34" height="34" fill="#fff" stroke="#000"/>' + b);
const stripes = (a) => a.map((w, i) => `<path d="M2 ${6 + i * 2.6}H${2 + w}" stroke="#000" stroke-width="1.700"/>`).join('');
const lrow = (bg, inner, circ, sq) => `<div class="h-[42px] ${bg} flex items-center border-b border-[#555555] shrink-0"><div class="w-[42px] pl-[8px] pb-[4px] h-full flex items-center border-r border-[#555555] shrink-0">${eye}</div><div class="w-[44px]"></div><div class="w-[7px] h-[37px] bg-[#3f6fee] shrink-0"></div><div class="w-[343px] h-full flex items-center border-r border-[#555555] text-[23.500px] shrink-0">${inner}</div><div class="w-[41px] flex justify-center">${circ}</div>${sq}</div>`;
const circ = S(18, 18, '<circle cx="9" cy="9" r="7" stroke-width="1.800"/>', 'text-[#c0c0c0]');
const cap = P('M5 13H20', 'stroke-width="2" stroke="#484848"');
const strokePanel = `<div class="h-[640px] shrink-0 text-[#7e7e7e] text-[23.500px]">
<div class="mt-[14px] h-[40px] flex items-center">${lab('線幅', 'text-[#dddddd]')}<div class="ml-[8px] flex h-[40px] border border-[#5c5c5c]"><div class="w-[34px] flex items-center justify-center border-r border-[#5c5c5c]">${spin('text-[#eeeeee]')}</div><div class="w-[130px] bg-[#3a3a3a]"></div><div class="w-[37px] border-l border-[#5c5c5c] flex items-center justify-center pr-[5px]">${down()}</div></div></div>
<div class="mt-[12px] h-[43px] flex items-center">${lab('線端')}${cells([R(9, 0, 17, 9) + R(9, 17, 17, 9) + R(17, 0, 9, 26) + '<circle cx="5" cy="13" r="3"/>' + P('M8 13H20'), F('M26 0H13A13 13 0 0 0 13 26H26V17H17Q11 17 11 13Q11 9 17 9H26Z'), R(0, 0, 26, 26) + R(10, 12, 16, 2, 'class="text-[#484848]"') + cap])}</div>
<div class="mt-[11px] h-[43px] flex items-center">${lab('角の形状')}${cells([F('M0 0H26V12H12V26H0ZM17 16H26V26H17Z'), F('M0 26V13A13 13 0 0 1 13 0H26V12H12V26ZM17 16H26V26H17Z'), F('M0 26V10L10 0H26V12H12V26ZM17 16H26V26H17Z')])}<div class="w-[84px] pl-[20px]">比率 :</div>${dim('ml-[8px] w-[94px]')}</div>
<div class="mt-[10px] h-[43px] flex items-center">${lab('線の位置')}${cells([F('M0 0H5V20H26V25H0ZM9 0H17V9H26V17H9Z'), F('M8 0H17V10H26V18H8Z') + P('M2 2V24H12', 'stroke-width="1.500"'), F('M0 0H7V18H26V26H0ZM12 0H18V10H26V14H12Z')])}</div>
<div class="mt-[25px] h-[43px] flex items-center pl-[12px]"><div class="w-[24px] h-[24px] bg-[#d2d2d2] rounded-[3px] flex items-center justify-center"><div class="w-[10px] h-[5px] bg-[#484848]"></div></div><div class="ml-[9px] w-[321px] text-white font-medium">破線</div><div class="flex h-[43px] border border-[#5c5c5c]"><div class="w-[74px] border-r border-[#5c5c5c] flex items-center justify-center">${S(56, 24, P('M2 24V10M2 2H18M26 2H40M54 2V14M12 22H28M36 22H54', 'stroke-width="3.500"'))}</div><div class="w-[75px] flex items-center justify-center">${S(56, 24, P('M2 8V2H10M2 16V22H10M46 2H54V8M54 16V22H46M20 2H36M20 22H36', 'stroke-width="3.500"'))}</div></div></div>
<div class="mt-[11px] h-[41px] flex gap-[8px] pl-[10px]">${Array(6).fill('<div class="w-[78px] h-[41px] bg-[#505050] flex items-center pl-[8px] text-[#626262]">0 mm</div>').join('')}</div>
<div class="h-[34px] flex items-center gap-[8px] pl-[9px]">${['線分', '間隔', '線分', '間隔', '線分', '間隔'].map(t => `<div class="w-[78px] text-center">${t}</div>`).join('')}</div>
<div class="mt-[25px] h-[42px] flex items-center">${lab('矢印')}<div class="ml-[6px] w-[96px] h-[42px] bg-[#777777] shrink-0"></div>${dd}<div class="ml-[21px] w-[96px] h-[42px] bg-[#777777] shrink-0"></div>${dd}<div class="ml-[20px]">${S(28, 22, P('M3 6H20M8 16H25') + F('M20 0L27 6L20 12ZM8 10L0 16L8 22Z'))}</div></div>
<div class="mt-[19px] h-[42px] flex items-center">${lab('倍率')}<div class="w-[6px]"></div>${sp}<div class="w-[20px]"></div>${sp}<div class="ml-[18px]">${S(28, 32, '<rect x="9" y="2" width="11" height="13" rx="5"/><rect x="9" y="17" width="11" height="13" rx="5"/>' + P('M1 2L27 28'))}</div></div>
<div class="mt-[16px] h-[43px] flex items-center">${lab('先端位置')}${cells([P('M1 6H16M16 2V10M1 19H16') + F('M15 14L24 19L15 24Z'), P('M1 5H26V8M1 19H16') + F('M15 14L24 19L15 24Z')])}</div>
<div class="mt-[26px] h-[42px] flex items-center">${lab('プロファイル')}<div class="ml-[6px] w-[202px] h-[42px] bg-[#777777] shrink-0"></div>${dd}<div class="ml-[19px] w-[51px]">${S(30, 22, P('M1 3V19L9 11Z', 'stroke-width="1.500"') + P('M15 0V22', 'stroke-width="1.500" stroke-dasharray="2 2"') + F('M29 2V20L19 11Z'))}</div>${S(24, 30, F('M2 1H22L12 11Z') + P('M0 15H24', 'stroke-dasharray="3 2"') + P('M12 19L4 28H20Z'))}</div>
</div>`;
const layersPanel = `<div class="flex-1 flex flex-col">
<div class="mt-[22px] h-[46px] flex items-center pl-[24px] shrink-0"><div class="w-[438px] h-[46px] rounded-[4px] bg-[#3a3a3a] border border-[#5c5c5c] flex items-center pl-[11px] text-[#cccccc] text-[22px]"><div class="w-[45px]">${lens('text-[#bdbdbd]')}</div>すべてを検索</div><div class="ml-[20px]">${S(27, 29, F('M0 0H27L16 14V29H11V14Z'), 'text-[#c8c8c8]')}</div></div>
<div class="mt-[17px] ml-[10px] w-[509px] h-[711px] border border-[#5a5a5a] flex flex-col shrink-0">
${lrow('bg-[#44586b]', `<div class="w-[51px] pl-[18px]">${down()}</div>${thumb('<path d="M23 6H33V10H28V12H25L23 10Z" fill="#222" stroke="none"/><path d="M2 21L6 23L10 26L15 28V30H2Z" fill="#222" stroke="none"/>')}<div class="ml-[13px] text-[24px] text-[#dcdcdc]">レイヤー 1</div>`, circ, '<div class="w-[12px] h-[12px] border-2 border-black bg-[#3f6fee] shrink-0"></div><div class="ml-auto self-start">' + S(12, 12, F('M0 0H12V11Z'), 'text-[#bbbbbb]') + '</div>')}
${lrow('', `<div class="w-[97px]"></div>${thumb(stripes([10, 16, 13, 6, 17, 24, 23, 25, 29, 18, 32]))}<div class="ml-[10px] text-[24px] text-[#d0d0d0]">finish</div>`, S(26, 26, '<circle cx="13" cy="13" r="11" stroke-width="1.800"/><circle cx="13" cy="13" r="7" stroke-width="1.800"/>', 'text-[#c0c0c0]'), '<div class="w-[16px] h-[16px] border-2 border-black bg-[#3f6fee] shrink-0"></div>')}
${lrow('', `<div class="w-[97px]"></div>${thumb(stripes([12, 30, 32, 20, 28, 22, 18, 16, 20, 8, 11]))}<div class="ml-[10px] text-[24px] text-[#d0d0d0]">finish</div>`, circ, '')}
</div>
<div class="h-[40px] flex items-center pl-[13px] text-[#c8c8c8] text-[24px]"><div class="w-[179px]">1 レイヤー</div>
<div class="w-[52px]">${S(26, 26, P('M12 6H2V24H20V16M12 14L23 3M15 2H24V11'))}</div><div class="w-[51px]">${lens('')}</div><div class="w-[48px]">${S(24, 24, '<rect x="1" y="1" width="15" height="15"/><rect x="8" y="8" width="14" height="14"/>' + R(8, 8, 8, 8))}</div><div class="w-[58px]">${S(32, 24, '<rect x="13" y="5" width="17" height="17"/>' + P('M21.500 9V18M17 13.500H26M1 1V7H7') + F('M6 2L12 7L6 12Z'))}</div><div class="w-[51px]">${S(24, 24, '<rect x="1" y="2" width="20" height="20"/>' + P('M11 7V17M6 12H16'))}</div>${S(22, 24, P('M0 5H22M7 4V1H15V4M3 7V23H19V7M8 9V19M11 9V19M14 9V19', 'stroke-width="1.800"'), 'text-[#6a6a6a]')}</div>
</div>`;
const rightPanels = `<section class="w-[540px] shrink-0 pl-[6px] bg-[#333333]"><div class="h-full bg-[#484848] flex flex-col">
${tabs(tabOn('w-[90px] pl-[9px]', '線', diamond) + tab('w-[148px] pl-[19px]', 'グラデーショ') + tab('w-[65px] pl-[19px]', '透明') + tab('w-[148px] pl-[17px]', 'アセットの書'), 'pr-[16px]')}
${strokePanel}
<div class="h-[3px] shrink-0 bg-[#303030]"></div>
${tabs(tabOn('w-[122px] pl-[19px]', 'レイヤー') + tab('w-[164px] pl-[19px]', 'アートボード') + tab('w-[164px] pl-[18px]', 'アピアランス'), 'pr-[16px]')}
${layersPanel}
</div></section>`;

/* ---------- dock ---------- */
const D = (b) => S(76, 76, b);
const white = '<rect x="1" y="1" width="74" height="74" rx="17" fill="#fdfdfd" stroke="none"/>';
const DISCORD = 'M20.317 4.3698a19.7913 19.7913 0 00-4.8851-1.5152.0741.0741 0 00-.0785.0371c-.211.3753-.4447.8648-.6083 1.2495-1.8447-.2762-3.68-.2762-5.4868 0-.1636-.3933-.4058-.8742-.6177-1.2495a.077.077 0 00-.0785-.037 19.7363 19.7363 0 00-4.8852 1.515.0699.0699 0 00-.0321.0277C.5334 9.0458-.319 13.5799.0992 18.0578a.0824.0824 0 00.0312.0561c2.0528 1.5076 4.0413 2.4228 5.9929 3.0294a.0777.0777 0 00.0842-.0276c.4616-.6304.8731-1.2952 1.226-1.9942a.076.076 0 00-.0416-.1057c-.6528-.2476-1.2743-.5495-1.8722-.8923a.077.077 0 01-.0076-.1277c.1258-.0943.2517-.1923.3718-.2914a.0743.0743 0 01.0776-.0105c3.9278 1.7933 8.18 1.7933 12.0614 0a.0739.0739 0 01.0785.0095c.1202.099.246.1981.3728.2924a.077.077 0 01-.0066.1276 12.2986 12.2986 0 01-1.873.8914.0766.0766 0 00-.0407.1067c.3604.698.7719 1.3628 1.225 1.9932a.076.076 0 00.0842.0286c1.961-.6067 3.9495-1.5219 6.0023-3.0294a.077.077 0 00.0313-.0552c.5004-5.177-.8382-9.6739-3.5485-13.6604a.061.061 0 00-.0312-.0286zM8.02 15.3312c-1.1825 0-2.1569-1.0857-2.1569-2.419 0-1.3332.9555-2.4189 2.157-2.4189 1.2108 0 2.1757 1.0952 2.1568 2.419 0 1.3332-.9555 2.4189-2.1569 2.4189zm7.9748 0c-1.1825 0-2.1569-1.0857-2.1569-2.419 0-1.3332.9554-2.4189 2.1569-2.4189 1.2108 0 2.1757 1.0952 2.1568 2.419 0 1.3332-.946 2.4189-2.1568 2.4189Z';
const pads = ['#35c940', '#fdb017', '#f2801e', '#c9181e', '#8f9498', '#f03a57', '#9b3fcb', '#2a8ef0', '#2fbf8f'];
const apps = [
 ['<g stroke="none"><rect x="1" y="1" width="74" height="74" rx="17" fill="url(#fb)"/><path d="M41 1H58A17 17 0 0 1 75 18V58A17 17 0 0 1 58 75H46Q43 60 43 46H32Q32 20 41 1Z" fill="#dfe6f2"/></g><path d="M20 22V29M55 22V29" stroke="#14233c" stroke-width="3.500"/><path d="M15 51Q37 68 60 51" stroke="#14233c" stroke-width="2.600"/>', 1],
 ['<rect x="1" y="1" width="74" height="74" rx="17" fill="#c3c4c6" stroke="none"/>' + pads.map((c, i) => `<rect x="${13 + (i % 3) * 18}" y="${13.5 + Math.floor(i / 3) * 17.5}" width="14" height="14" rx="3" fill="${c}" stroke="none"/>`).join(''), 0],
 [white + '<g stroke="none"><circle cx="38" cy="38" r="32" fill="#f9b20a"/><path d="M38 38L10.300 22A32 32 0 0 1 65.700 22Z" fill="#dd3a2b"/><path d="M10.300 22A32 32 0 0 0 38 70L52 46L38 38Z" fill="#1f8f42"/><path d="M38 22H65.700A32 32 0 0 1 38 70L52 46Z" fill="#f9b20a"/><circle cx="38" cy="38" r="16.500" fill="#fff"/><circle cx="38" cy="38" r="13" fill="#1f6fea"/></g>', 1],
 [white + '<g stroke="none"><path d="M50 12V29L18 52L11 47V43L44 14Z" fill="#0867b0"/><path d="M50 64V47L18 24L11 29V33L44 62Z" fill="#127cc9"/><path d="M49 11L64 18V58L49 65Z" fill="#2496ea"/></g>', 1],
 [white + '<g stroke="none"><rect x="20" y="13" width="43" height="13" rx="2" fill="#41a5ee"/><rect x="20" y="25" width="43" height="13" fill="#2b7cd3"/><rect x="20" y="37" width="43" height="13" fill="#185abd"/><rect x="20" y="49" width="43" height="13" rx="2" fill="#103f91"/><rect x="8" y="24" width="28" height="28" rx="3" fill="#1650b0"/></g><text x="22" y="45" font-size="19" font-weight="bold" text-anchor="middle" fill="#fff" stroke="none">W</text>', 0],
 ['<rect x="0" y="1" width="76" height="74" rx="17" fill="#001428" stroke="none"/><text x="39" y="53" font-size="43" font-weight="bold" font-family="Open Sans" text-anchor="middle" fill="#31a8ff" stroke="none">Ps</text>', 1],
 ['<rect x="0" y="1" width="76" height="74" rx="17" fill="#300000" stroke="none"/><text x="38" y="53" font-size="45" font-weight="bold" font-family="Open Sans" text-anchor="middle" fill="#ff9a00" stroke="none">Ai</text>', 1],
 [white + '<g stroke="none"><path d="M6 42C5 34 6 28 9 25C10 20 13 16 18 14C16 18 18 21 23 21L27 22C32 9 50 5 62 11L57 13Q62 14 66 18L63 18Q70 28 70 41C68 60 54 70 38 70C20 70 7 58 6 42Z" fill="#176fd6"/><path d="M27 22C32 11 42 8 52 10Q44 14 40 21Q34 19 27 22Z" fill="#7d8fe8"/><path d="M10 44Q15 60 34 66Q20 54 21 38Q22 24 27 22L23 21Q14 28 10 44Z" fill="#0f4fae"/><ellipse cx="38" cy="40" rx="16" ry="13" fill="#d4ecfc"/><path d="M23 36L38 45L53 35Q50 26 38 26Q27 27 23 36Z" fill="#f5fbff"/></g><path d="M25 34L38 43L52 33" stroke="#8cc3ee"/>', 0],
 ['<rect x="1" y="1" width="74" height="74" rx="17" fill="#9fa6aa" stroke="none"/><rect x="4" y="4" width="68" height="68" rx="14" fill="#000" stroke="none"/><rect x="8" y="8" width="60" height="60" rx="10" fill="#1d1d1f" stroke="none"/><path d="M14 15L22 19.500L14 24M26 27H36" stroke="#f2f2f2"/>', 1],
 ['<rect x="1" y="1" width="74" height="74" rx="17" fill="url(#gg)" stroke="none"/><circle cx="38" cy="38" r="30" fill="#4a4e50" stroke="#2c2f31" stroke-width="4" stroke-dasharray="3 1.500"/><circle cx="38" cy="38" r="27" stroke="#2c2f31"/><circle cx="38" cy="38" r="22" fill="#6d7173" stroke="#a4a8aa" stroke-width="2.500"/><circle cx="38" cy="38" r="19" stroke="#2c2f31" stroke-width="2"/><path d="M38 38L27 19M38 38H60M38 38L27 57" stroke="#2c2f31" stroke-width="6"/><path d="M38 38L27 19M38 38H60M38 38L27 57" stroke="#b4b8ba" stroke-width="2.500"/><circle cx="38" cy="38" r="4" fill="#2c2f31" stroke="#a4a8aa"/>', 0],
 ['<rect x="1" y="1" width="74" height="74" rx="17" fill="#1b86e8" stroke="none"/><rect x="5" y="5" width="66" height="66" rx="13" stroke="#8ccaff" stroke-width="1.500"/><circle cx="38" cy="38" r="24" stroke="#4aa4f4" stroke-width="1.500"/><g stroke="#9fd2ff" stroke-width="1.800"><path d="M29 19L33 15L58 57L53 60ZM46 19L42 15L18 57L23 60ZM12 43H64V50H12Z"/></g>', 0],
 ['<rect x="1" y="1" width="74" height="74" rx="17" fill="url(#mg)" stroke="none"/><path d="M29 56V20L54 14V50M29 25L54 19" stroke="#fff" stroke-width="4.500"/><ellipse cx="22.500" cy="56" rx="8" ry="6" fill="#fff" stroke="none"/><ellipse cx="47.500" cy="51" rx="8" ry="6" fill="#fff" stroke="none"/>', 0],
 [`<rect x="1" y="1" width="74" height="74" rx="17" fill="#5560ee" stroke="none"/><path transform="translate(11 11) scale(2.250)" fill="#fff" stroke="none" d="${DISCORD}"/>`, 1],
 [white + '<g stroke="none" transform="translate(12 12) scale(2.180)"><path fill="#e01e5a" d="M5.042 15.165a2.528 2.528 0 0 1-2.52 2.523A2.528 2.528 0 0 1 0 15.165a2.527 2.527 0 0 1 2.522-2.52h2.52v2.52zM6.313 15.165a2.527 2.527 0 0 1 2.521-2.52 2.527 2.527 0 0 1 2.521 2.520v6.313A2.528 2.528 0 0 1 8.834 24a2.528 2.528 0 0 1-2.521-2.522v-6.313z"/><path fill="#36c5f0" d="M8.834 5.042a2.528 2.528 0 0 1-2.521-2.52A2.528 2.528 0 0 1 8.834 0a2.528 2.528 0 0 1 2.521 2.522v2.520H8.834zM8.834 6.313a2.528 2.528 0 0 1 2.521 2.521 2.528 2.528 0 0 1-2.521 2.521H2.522A2.528 2.528 0 0 1 0 8.834a2.528 2.528 0 0 1 2.522-2.521h6.312z"/><path fill="#2eb67d" d="M18.956 8.834a2.528 2.528 0 0 1 2.522-2.521A2.528 2.528 0 0 1 24 8.834a2.528 2.528 0 0 1-2.522 2.521h-2.522V8.834zM17.688 8.834a2.528 2.528 0 0 1-2.523 2.521 2.527 2.527 0 0 1-2.520-2.521V2.522A2.527 2.527 0 0 1 15.165 0a2.528 2.528 0 0 1 2.523 2.522v6.312z"/><path fill="#ecb22e" d="M15.165 18.956a2.528 2.528 0 0 1 2.523 2.522A2.528 2.528 0 0 1 15.165 24a2.527 2.527 0 0 1-2.520-2.522v-2.522h2.520zM15.165 17.688a2.527 2.527 0 0 1-2.520-2.523 2.526 2.526 0 0 1 2.520-2.520h6.313A2.527 2.527 0 0 1 24 15.165a2.528 2.528 0 0 1-2.522 2.523h-6.313z"/></g>', 0]
];
const hammer = '<div class="absolute left-[10px] top-[-8px]">' + S(76, 90, '<path d="M20 80L50 24" stroke="#2b2b2e" stroke-width="11"/><path d="M36 52L50 24" stroke="#55565a" stroke-width="5"/><path d="M34 4Q50 1 62 9L72 12L74 17L68 23L62 20L54 23L47 18Q44 9 34 8Z" fill="#4b4d52" stroke="#2b2b2e" stroke-width="1"/>') + '</div>';
const badge = '<div class="absolute left-[52px] top-[-9px] w-[34px] h-[34px] rounded-full bg-[#f5303a] text-white text-[17px] flex items-center justify-center">1</div>';
const dock = `<nav class="absolute left-[2757px] top-[177px] w-[113px] h-[1495px] rounded-[30px] border-2 border-[#66727e] bg-linear-to-b from-[#45484f] to-[#465d70] pl-[13px] pt-[13px]">
<div class="flex flex-col gap-[20px]">${apps.map((a, i) => `<div class="relative flex items-center">${D(a[0])}${i === 9 ? badge : ''}${i === 10 ? hammer : ''}${a[1] ? '<div class="ml-[10px] w-[8px] h-[8px] rounded-full bg-black"></div>' : ''}</div>`).join('')}</div>
<div class="mt-[31px] w-[82px] h-[2px] bg-[#1f3d58]"></div>
<div class="mt-[24px] ml-[4px]">${S(70, 88, '<path d="M2 12L10 79Q12 84 34 85Q56 84 58 79L67 12Q34 24 2 12Z" fill="#d6d6d5" stroke="#e6e7e7"/><ellipse cx="34" cy="12" rx="32" ry="8" fill="#a3a5a3" stroke="#dcdcdc"/><path d="M6 11L14 3L24 8L32 2L42 7L52 3L62 12L46 17L30 14L16 17Z" fill="#e4e4e0" stroke="none"/><path d="M12 11L20 5L26 13Z" fill="#3a4a44" stroke="none"/><path d="M24 11L30 7L34 13Z" fill="#49a88c" stroke="none"/><path d="M36 13L44 6L50 14Z" fill="#7a3f2a" stroke="none"/><path d="M12 34Q34 44 54 28M14 56Q30 52 40 62" stroke="#c9cacb" stroke-width="1.500"/>')}</div>
</nav>`;

const chev2 = (d) => S(16, 12, P(d, 'stroke-width="1.800"'), 'text-[#c0c0c0]');
document.body.innerHTML = `
<svg width="0" height="0" class="absolute"><defs><linearGradient id="gr"><stop offset="0" stop-color="#111"/><stop offset="1" stop-color="#ccc"/></linearGradient><linearGradient id="fb" x2="0" y2="1"><stop offset="0" stop-color="#1ab4fb"/><stop offset="1" stop-color="#1a68f2"/></linearGradient><linearGradient id="gg" x2="0" y2="1"><stop offset="0" stop-color="#c6cacd"/><stop offset="1" stop-color="#8c9092"/></linearGradient><linearGradient id="mg" x2="0" y2="1"><stop offset="0" stop-color="#fb4b62"/><stop offset="1" stop-color="#f9213c"/></linearGradient></defs></svg>
${menubar}
<div class="w-[2760px] h-[1750px] rounded-t-[16px] overflow-hidden bg-[#484848] border-t border-[#5c5c5c] flex flex-col">
${titlebar}${controlbar}
<div class="flex flex-1">
<div class="flex flex-col w-[665px] shrink-0"><div class="h-[23px] bg-[#3b3b3b] border-b border-[#2c2c2c] flex items-center shrink-0"><div class="w-[145px] pl-[12px]">${chev2('M7 1L2 6L7 11M14 1L9 6L14 11')}</div><div class="pl-[13px]">${chev2('M7 1L2 6L7 11M14 1L9 6L14 11')}</div></div>
<div class="flex flex-1 bg-[#303030] gap-[4px]">${toolbar}${leftPanels}</div></div>
${documentArea}
<div class="flex flex-col w-[540px] shrink-0"><div class="h-[23px] bg-[#3b3b3b] border-b border-[#2c2c2c] flex items-center justify-end pr-[16px] shrink-0">${chev2('M2 1L7 6L2 11M9 1L14 6L9 11')}</div><div class="flex flex-1">${rightPanels}</div></div>
</div></div>
${dock}
<div class="absolute left-[2548px] top-[300px] w-[196px] h-[52px] rounded-[8px] bg-[#9c9c9c] border border-[#b0b0b0] text-black text-[26.800px] flex items-center justify-center">Launchpad</div>
<div class="absolute left-[2861px] top-[330px]">${S(30, 40, '<path d="M3 3V33L10 27L15 38L21 35L16 25H26Z" fill="#000" stroke="#fff" stroke-width="2.500"/>')}</div>`;
</script>
</body>
</html>
